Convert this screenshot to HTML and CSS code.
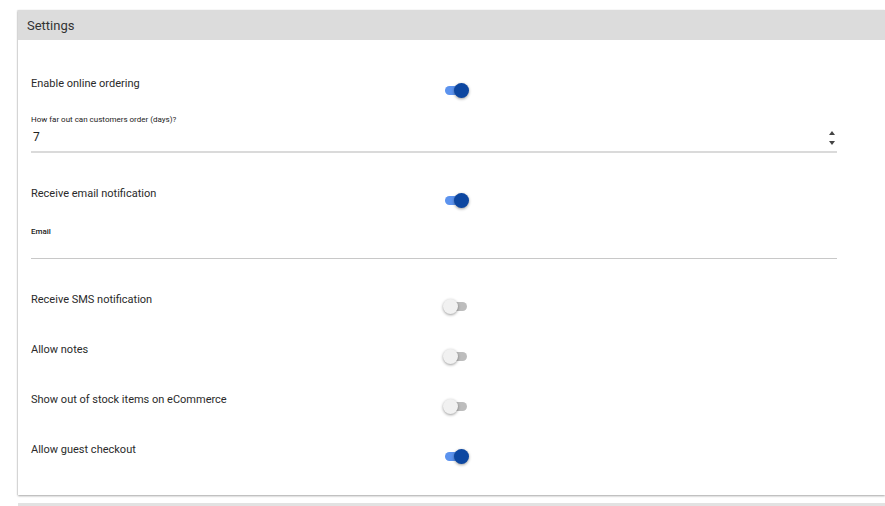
FILE: index.html
```html
<!DOCTYPE html>
<html>
<head>
<meta charset="utf-8">
<link rel="stylesheet" href="styles.css">
</head>
<body>
<div class="page">
  <section class="card">
    <header class="card-header">Settings</header>
    <div class="card-body">
      <div class="toggle-row first">
        <div class="label">Enable online ordering</div>
        <div class="switch on"><span class="track"></span><span class="thumb"></span></div>
      </div>
      <div class="field days">
        <div class="field-label">How far out can customers order (days)?</div>
        <div class="field-input">
          <span class="value">7</span>
          <span class="spinner"><span class="up"></span><span class="down"></span></span>
        </div>
      </div>
      <div class="toggle-row after-field short">
        <div class="label">Receive email notification</div>
        <div class="switch on"><span class="track"></span><span class="thumb"></span></div>
      </div>
      <div class="field email">
        <div class="field-label bold">Email</div>
        <div class="field-input"></div>
      </div>
      <div class="toggle-row after-field">
        <div class="label">Receive SMS notification</div>
        <div class="switch"><span class="track"></span><span class="thumb"></span></div>
      </div>
      <div class="toggle-row">
        <div class="label">Allow notes</div>
        <div class="switch"><span class="track"></span><span class="thumb"></span></div>
      </div>
      <div class="toggle-row">
        <div class="label">Show out of stock items on eCommerce</div>
        <div class="switch"><span class="track"></span><span class="thumb"></span></div>
      </div>
      <div class="toggle-row last">
        <div class="label">Allow guest checkout</div>
        <div class="switch on"><span class="track"></span><span class="thumb"></span></div>
      </div>
    </div>
  </section>
  <div class="next-card"></div>
</div>
</body>
</html>
```
FILE: styles.css
```css
html, body {
  margin: 0;
  padding: 0;
  background: #fff;
  font-family: Roboto, "Liberation Sans", Arial, sans-serif;
  color: #222;
}
.page {
  padding: 10px 0 0 18px;
  overflow: hidden;
  width: 867px;
}
.card {
  width: 867px;
  background: #fff;
  box-shadow: 0 1px 2px rgba(0,0,0,0.35), -1px 0 1px rgba(0,0,0,0.06);
}
.card-header {
  height: 30px;
  line-height: 32px;
  background: #dcdcdc;
  padding-left: 9px;
  font-size: 13px;
  color: #333;
}
.card-body {
  padding: 0 48px 2px 13px;
}
.toggle-row {
  display: grid;
  grid-template-columns: 414px auto;
  height: 50px;
  align-items: start;
}
.toggle-row.first {
  margin-top: 37px;
  height: 38px;
}
.toggle-row.after-field {
  margin-top: 34px;
}
.toggle-row.short {
  height: 38px;
}
.label {
  font-size: 11px;
  line-height: 14px;
  color: #2a2a2a;
}
.switch {
  position: relative;
  width: 22px;
  height: 15px;
  margin-top: 6px;
}
.switch .track {
  position: absolute;
  left: 0;
  top: 3px;
  width: 22px;
  height: 9px;
  border-radius: 5px;
  background: #bdbdbd;
}
.switch .thumb {
  position: absolute;
  top: 0;
  left: -2px;
  width: 15px;
  height: 15px;
  border-radius: 50%;
  background: #f1f1f1;
  box-shadow: 0 1px 3px rgba(0,0,0,0.4);
}
.switch.on .track {
  background: #5c93ee;
}
.switch.on .thumb {
  left: 9px;
  background: #0d47a1;
}
.field-label {
  font-size: 8px;
  line-height: 10px;
  color: #222;
}
.field-label.bold {
  font-weight: 500;
  color: #222;
}
.field-input {
  position: relative;
}
.days .field-input {
  height: 24px;
  border-bottom: 2px solid #dadada;
  margin-top: 2px;
}
.email .field-input {
  height: 21px;
  border-bottom: 1px solid #c8c8c8;
  margin-top: 0;
}
.email {
  margin-top: 2px;
}
.field-input .value {
  display: block;
  font-size: 12px;
  line-height: 18px;
  padding: 1px 0 0 2px;
  color: #222;
}
.spinner {
  position: absolute;
  right: 2px;
  top: 4px;
  display: flex;
  flex-direction: column;
  gap: 6px;
}
.spinner .up {
  width: 0; height: 0;
  border-left: 3px solid transparent;
  border-right: 3px solid transparent;
  border-bottom: 4px solid #444;
}
.spinner .down {
  width: 0; height: 0;
  border-left: 3px solid transparent;
  border-right: 3px solid transparent;
  border-top: 4px solid #444;
}
.next-card {
  margin-top: 8px;
  height: 3px;
  background: #e2e2e2;
}
```
